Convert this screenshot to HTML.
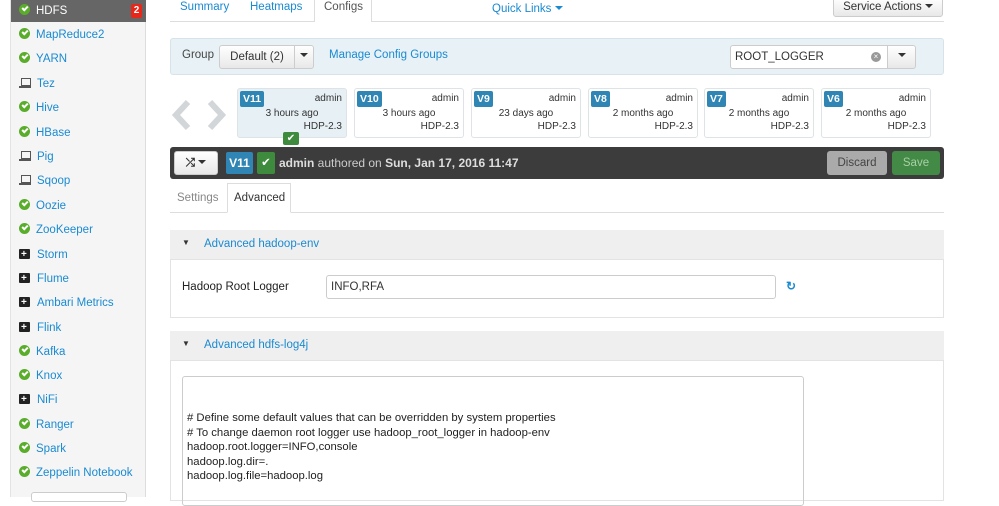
<!DOCTYPE html>
<html><head><meta charset="utf-8"><style>
*{box-sizing:border-box;margin:0;padding:0}
body{width:999px;height:497px;overflow:hidden;background:#fff;font-family:"Liberation Sans",Arial,sans-serif;font-size:11.5px;color:#333;position:relative}
.a{position:absolute}
.blue{color:#1a8ad1}
#side{left:10px;top:0;width:136px;height:497px;background:#f5f5f5;border-left:1px solid #e3e3e3;border-right:1px solid #ddd}
.it{position:absolute;left:8px;font-size:11.5px;color:#1a8ad1;height:16px;line-height:16px}
.ok{display:inline-block;width:11px;height:11px;border-radius:50%;background:#5aac2b;vertical-align:-1px;margin-right:6px;position:relative}
.ok:after{content:"";position:absolute;left:3px;top:2px;width:4px;height:2px;border-left:2px solid #fff;border-bottom:2px solid #fff;transform:rotate(-45deg)}
.lap{display:inline-block;width:12px;height:10px;margin-right:6px;vertical-align:-1px;position:relative}
.lap:before{content:"";position:absolute;left:2px;top:0;width:8px;height:6px;border:1.5px solid #555}
.lap:after{content:"";position:absolute;left:0;top:8px;width:12px;height:2px;background:#555}
.kit{display:inline-block;width:11px;height:10px;background:#222;margin-right:7px;vertical-align:-1px;position:relative;border-radius:1px}
.kit:before{content:"+";position:absolute;left:2px;top:-2px;color:#fff;font-size:10px;font-weight:bold}
.btn{position:absolute;border:1px solid #ccc;border-radius:3px;background:linear-gradient(#fff,#e8e8e8);font-size:11.5px;color:#333;text-align:center}
.card{position:absolute;top:88px;width:110px;height:50px;border:1px solid #dde3e6;border-radius:3px;background:#fff;font-size:10px;color:#333}
.card .v{position:absolute;left:2px;top:2px;background:#2f85b3;color:#fff;font-weight:bold;font-size:10.5px;padding:2px 3px;border-radius:2px}
.card .ad{position:absolute;right:4px;top:4px}
.card .t{position:absolute;left:0;right:0;top:19px;text-align:center}
.card .h{position:absolute;right:4px;top:32px}
.caret{display:inline-block;width:0;height:0;border-left:4px solid transparent;border-right:4px solid transparent;border-top:4px solid #333;vertical-align:2px}
pre{font-family:"Liberation Sans",Arial,sans-serif;font-size:11.3px;line-height:14.5px;color:#222}
</style></head><body>
<div id="side" class="a">
  <div class="a" style="left:0;top:0;width:135px;height:22px;background:#666"></div>
  <div class="it" style="top:3px;color:#fff"><span class="ok"></span>HDFS</div>
  <div class="a" style="left:120px;top:4px;width:11px;height:14px;background:#e8271b;border-radius:2px;color:#fff;font-size:10px;font-weight:bold;text-align:center;line-height:14px">2</div>
  <div class="it" style="top:27px"><span class="ok"></span>MapReduce2</div>
  <div class="it" style="top:51px"><span class="ok"></span>YARN</div>
  <div class="it" style="top:76px"><span class="lap"></span>Tez</div>
  <div class="it" style="top:100px"><span class="ok"></span>Hive</div>
  <div class="it" style="top:125px"><span class="ok"></span>HBase</div>
  <div class="it" style="top:149px"><span class="lap"></span>Pig</div>
  <div class="it" style="top:173px"><span class="lap"></span>Sqoop</div>
  <div class="it" style="top:198px"><span class="ok"></span>Oozie</div>
  <div class="it" style="top:222px"><span class="ok"></span>ZooKeeper</div>
  <div class="it" style="top:247px"><span class="kit"></span>Storm</div>
  <div class="it" style="top:271px"><span class="kit"></span>Flume</div>
  <div class="it" style="top:295px"><span class="kit"></span>Ambari Metrics</div>
  <div class="it" style="top:320px"><span class="kit"></span>Flink</div>
  <div class="it" style="top:344px"><span class="ok"></span>Kafka</div>
  <div class="it" style="top:368px"><span class="ok"></span>Knox</div>
  <div class="it" style="top:392px"><span class="kit"></span>NiFi</div>
  <div class="it" style="top:417px"><span class="ok"></span>Ranger</div>
  <div class="it" style="top:441px"><span class="ok"></span>Spark</div>
  <div class="it" style="top:465px"><span class="ok"></span>Zeppelin Notebook</div>
  <div class="a" style="left:20px;top:492px;width:96px;height:10px;border:1px solid #ccc;border-radius:3px;background:#fff"></div>
</div>

<div class="a" style="left:170px;top:21px;width:774px;height:1px;background:#ddd"></div>
<div class="a" style="left:314px;top:-2px;width:58px;height:24px;border:1px solid #ddd;border-bottom:none;background:#fff;border-radius:3px 3px 0 0"></div>
<div class="a blue" style="left:180px;top:1px">Summary</div>
<div class="a blue" style="left:250px;top:1px">Heatmaps</div>
<div class="a" style="left:324px;top:1px;color:#555">Configs</div>
<div class="a blue" style="left:492px;top:3px">Quick Links <span class="caret" style="border-top-color:#1a8ad1"></span></div>
<div class="btn" style="left:833px;top:-3px;width:110px;height:20px;line-height:18px">Service Actions <span class="caret"></span></div>

<div class="a" style="left:170px;top:38px;width:774px;height:37px;background:#e8f1f6;border:1px solid #d6e3ea;border-radius:3px"></div>
<div class="a" style="left:182px;top:49px;color:#444">Group</div>
<div class="btn" style="left:219px;top:45px;width:76px;height:24px;line-height:22px;border-radius:3px 0 0 3px">Default (2)</div>
<div class="btn" style="left:294px;top:45px;width:20px;height:24px;line-height:20px;border-radius:0 3px 3px 0"><span class="caret"></span></div>
<div class="a blue" style="left:329px;top:49px">Manage Config Groups</div>
<div class="a" style="left:730px;top:45px;width:158px;height:24px;border:1px solid #ccc;border-radius:3px 0 0 3px;background:#fff;padding:5px 4px;color:#333">ROOT_LOGGER</div>
<div class="a" style="left:871px;top:52px;width:10px;height:10px;border-radius:50%;background:#999;color:#fff;font-size:8px;line-height:10px;text-align:center">×</div>
<div class="btn" style="left:887px;top:45px;width:29px;height:24px;line-height:20px;border-radius:0 3px 3px 0"><span class="caret"></span></div>

<svg class="a" style="left:168px;top:98px" width="62" height="34"><path d="M20 4 L8 17 L20 30" stroke="#d2d6d9" stroke-width="6" fill="none"/><path d="M42 4 L54 17 L42 30" stroke="#d2d6d9" stroke-width="6" fill="none"/></svg>

<div class="card" style="left:237px;background:#e6f0f5"><span class="v">V11</span><span class="ad">admin</span><div class="t">3 hours ago</div><span class="h">HDP-2.3</span></div>
<div class="a" style="left:283px;top:132px;width:16px;height:13px;background:#3e8b3e;border-radius:2px;color:#fff;font-size:10px;text-align:center;line-height:13px">✔</div>
<div class="card" style="left:354px"><span class="v">V10</span><span class="ad">admin</span><div class="t">3 hours ago</div><span class="h">HDP-2.3</span></div>
<div class="card" style="left:471px"><span class="v">V9</span><span class="ad">admin</span><div class="t">23 days ago</div><span class="h">HDP-2.3</span></div>
<div class="card" style="left:588px"><span class="v">V8</span><span class="ad">admin</span><div class="t">2 months ago</div><span class="h">HDP-2.3</span></div>
<div class="card" style="left:704px"><span class="v">V7</span><span class="ad">admin</span><div class="t">2 months ago</div><span class="h">HDP-2.3</span></div>
<div class="card" style="left:821px"><span class="v">V6</span><span class="ad">admin</span><div class="t">2 months ago</div><span class="h">HDP-2.3</span></div>

<div class="a" style="left:170px;top:147px;width:774px;height:32px;background:#3c3c3c;border-radius:3px"></div>
<div class="btn" style="left:174px;top:151px;width:44px;height:24px;line-height:22px;font-weight:bold">⤮ <span class="caret"></span></div>
<div class="a" style="left:226px;top:152px;width:27px;height:22px;background:#2f85b3;color:#fff;font-size:12px;font-weight:bold;text-align:center;line-height:22px;border-radius:2px">V11</div>
<div class="a" style="left:257px;top:152px;width:18px;height:22px;background:#3e8b3e;color:#fff;text-align:center;line-height:22px;border-radius:2px">✔</div>
<div class="a" style="left:279px;top:156px;color:#ccc;font-size:12px"><b style="color:#ddd">admin</b> authored on <b style="color:#ddd">Sun, Jan 17, 2016 11:47</b></div>
<div class="a" style="left:827px;top:151px;width:60px;height:24px;background:#aaa;border-radius:3px;color:#444;text-align:center;line-height:24px">Discard</div>
<div class="a" style="left:892px;top:151px;width:48px;height:24px;background:#428a46;border-radius:3px;color:#a8d0a6;text-align:center;line-height:24px">Save</div>

<div class="a" style="left:170px;top:212px;width:774px;height:1px;background:#ddd"></div>
<div class="a" style="left:227px;top:183px;width:64px;height:30px;border:1px solid #ddd;border-bottom:1px solid #fff;background:#fff"></div>
<div class="a" style="left:177px;top:192px;color:#888">Settings</div>
<div class="a" style="left:234px;top:192px;color:#333">Advanced</div>

<div class="a" style="left:170px;top:230px;width:774px;height:88px;border:1px solid #e3e3e3"></div>
<div class="a" style="left:170px;top:230px;width:774px;height:30px;background:#efefef;border-bottom:1px solid #e3e3e3"></div>
<div class="a" style="left:182px;top:238px;font-size:8px">▼</div>
<div class="a blue" style="left:204px;top:238px">Advanced hadoop-env</div>
<div class="a" style="left:182px;top:281px;color:#222">Hadoop Root Logger</div>
<div class="a" style="left:326px;top:275px;width:450px;height:24px;border:1px solid #ccc;border-radius:3px;padding:5px 4px;color:#333">INFO,RFA</div>
<div class="a blue" style="left:786px;top:279px;font-weight:bold;font-size:12px">↻</div>

<div class="a" style="left:170px;top:331px;width:774px;height:170px;border:1px solid #e3e3e3"></div>
<div class="a" style="left:170px;top:331px;width:774px;height:30px;background:#efefef;border-bottom:1px solid #e3e3e3"></div>
<div class="a" style="left:182px;top:339px;font-size:8px">▼</div>
<div class="a blue" style="left:204px;top:339px">Advanced hdfs-log4j</div>
<div class="a" style="left:182px;top:376px;width:622px;height:130px;border:1px solid #ccc;border-radius:3px"></div>
<pre class="a" style="left:187px;top:411px"># Define some default values that can be overridden by system properties
# To change daemon root logger use hadoop_root_logger in hadoop-env
hadoop.root.logger=INFO,console
hadoop.log.dir=.
hadoop.log.file=hadoop.log</pre>
</body></html>
